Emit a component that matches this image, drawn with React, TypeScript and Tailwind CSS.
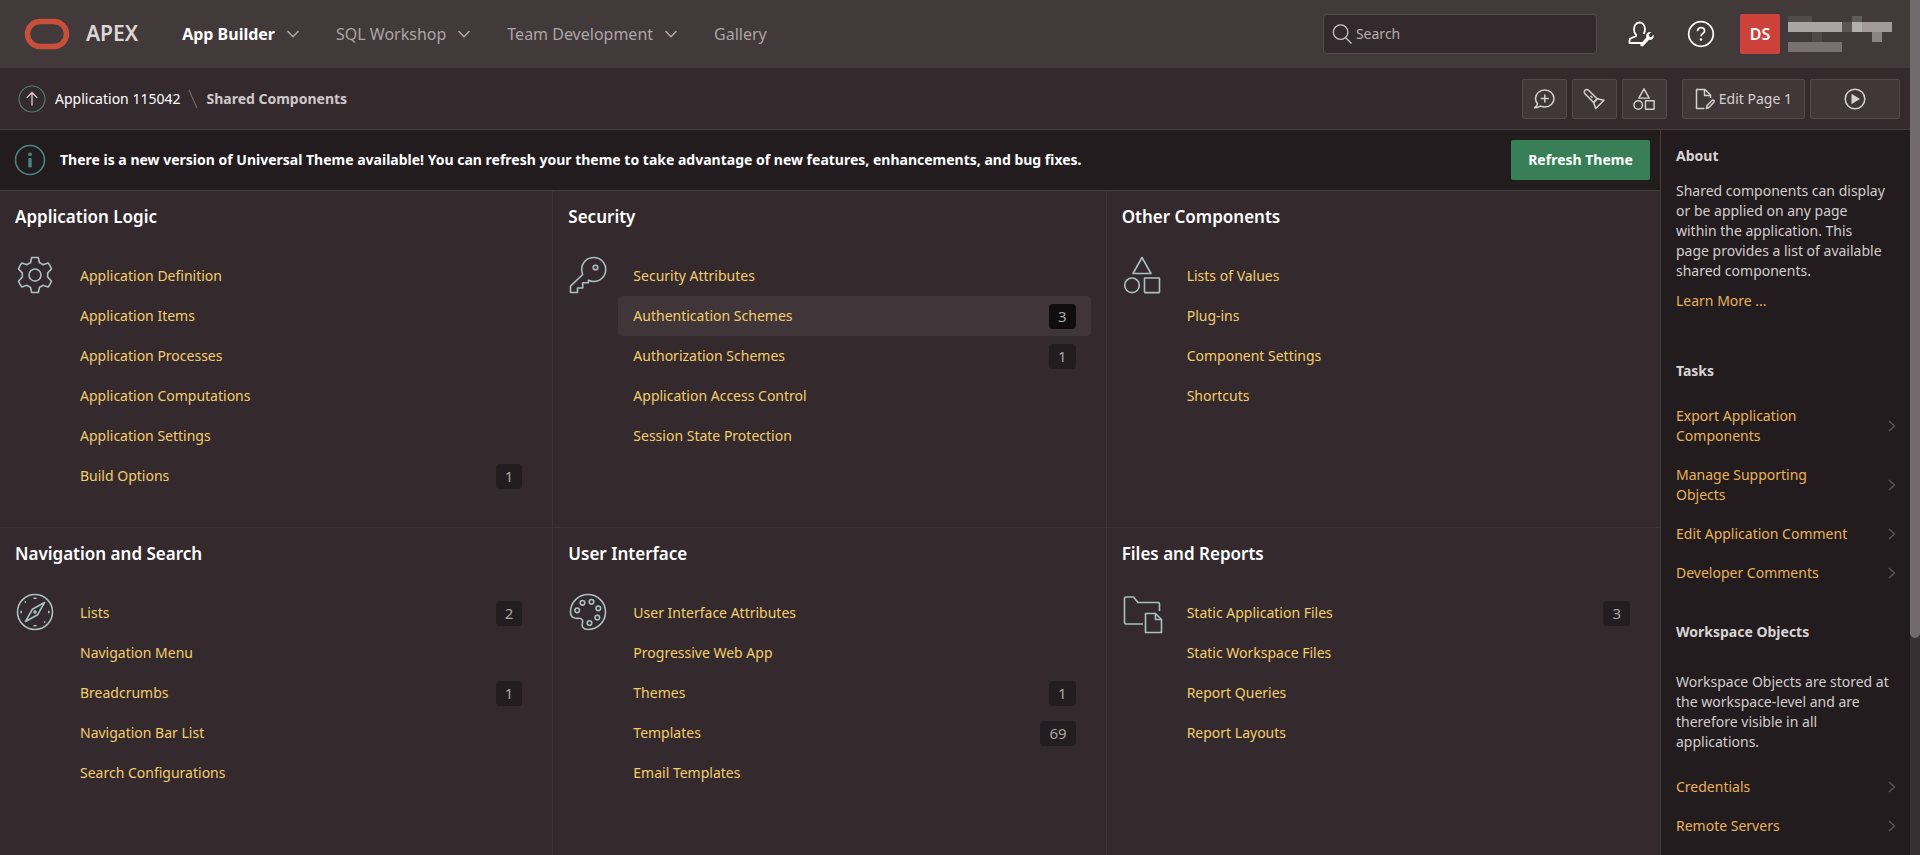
import React from 'react';

type IconProps = { className?: string };

const LogoIcon = () => (
  <svg viewBox="0 0 46 32" className="w-[46px] h-8" fill="none" stroke="#c8503a" strokeWidth="5.5">
    <rect x="3.5" y="3.5" width="39" height="25" rx="12.5" />
  </svg>
);

const ChevronDown = () => (
  <svg viewBox="0 0 12 8" className="w-3 h-2" fill="none" stroke="currentColor" strokeWidth="1.4">
    <path d="M0.500 1L6 6.800 11.500 1" />
  </svg>
);

const ChevronRight = () => (
  <svg viewBox="0 0 8 14" className="w-2 h-[14px] shrink-0 text-[#5d5556]" fill="none" stroke="currentColor" strokeWidth="1.3">
    <path d="M1 2l5.500 5L1 12" />
  </svg>
);

const SearchIcon = () => (
  <svg viewBox="0 0 22 22" className="w-[22px] h-[22px] text-[#c9c3c4]" fill="none" stroke="currentColor" strokeWidth="1.5">
    <circle cx="9.500" cy="9" r="8" />
    <path d="M15 15l6.500 6.500" />
  </svg>
);

const UserWrenchIcon = () => (
  <svg viewBox="0 0 28 28" className="w-7 h-7 text-white" fill="none" stroke="currentColor" strokeWidth="1.800" strokeLinejoin="round">
    <path d="M15 23H2.500v-2.500c0-1.500.8-2.200 2-2.600l4-1.400c.7-.3.9-1.200.4-1.800C7.600 13.200 7 11.300 7 9.200 7 5.500 9.200 2.500 12.500 2.500S18 5.500 18 9.200c0 1.800-.5 3.400-1.300 4.700" />
    <path
      d="M26.600 14.800l-2.500 2.400-1.900-.6-.5-1.900 2.300-2.500c-2.500-.5-4.900 1.300-4.900 3.800 0 .5.100 1 .3 1.400l-5.600 6c-.7.800-.6 1.900.1 2.600.8.700 1.900.600 2.600-.200l5.500-6c2.900.8 5.500-1.900 4.600-5z"
      fill="currentColor"
      stroke="none"
    />
  </svg>
);

const HelpIcon = () => (
  <svg viewBox="0 0 28 28" className="w-7 h-7 text-white" fill="none" stroke="currentColor" strokeWidth="1.700">
    <circle cx="14" cy="14" r="12.300" />
    <path d="M10.500 11.300c0-2.200 1.500-3.600 3.500-3.600s3.500 1.300 3.500 3.200c0 2.700-3.500 2.700-3.500 5.300" />
    <circle cx="14" cy="19.500" r="1.200" fill="currentColor" stroke="none" />
  </svg>
);

const CommentPlusIcon = () => (
  <svg viewBox="0 0 22 22" className="w-[22px] h-[22px]" fill="none" stroke="currentColor" strokeWidth="1.500" strokeLinejoin="round">
    <path d="M4.600 15.800C3.300 14.300 2.500 12.500 2.500 10.500c0-4.700 4.100-8.500 9.300-8.500 5.100 0 9.200 3.800 9.200 8.500S16.900 19 11.800 19c-1.600 0-3-.3-4.300-.9-1.500 1-3.500 1.700-5.900 1.600 1.600-1 2.600-2.300 3-3.900z" />
    <path d="M11.800 6.500v8M7.800 10.500h8" />
  </svg>
);

const FlashlightIcon = () => (
  <svg viewBox="0 0 22 22" className="w-[22px] h-[22px]" fill="none" stroke="currentColor" strokeWidth="1.500" strokeLinejoin="round">
    <path d="M10.600 14.600L2 5.800C1 4.800 1 3.300 2 2.300s2.500-1 3.500 0l8.700 8.500" />
    <path d="M14.200 10.800l6.800 1.400-8.200 8.300-2.200-5.900z" />
    <path d="M10.600 14.600l3.600-3.800M7.500 7.700l2 2" />
  </svg>
);

const ShapesIcon = ({ className }: IconProps) => (
  <svg viewBox="0 0 38 38" className={className} fill="none" stroke="currentColor" strokeLinejoin="round">
    <path d="M19 1.500l9 16H10z" />
    <circle cx="9" cy="29.300" r="7.300" />
    <rect x="21.500" y="22" width="15" height="14.600" rx="0.600" />
  </svg>
);

const EditPageIcon = () => (
  <svg viewBox="0 0 20 22" className="w-5 h-[22px]" fill="none" stroke="currentColor" strokeWidth="1.500" strokeLinejoin="round">
    <path d="M9.500 20.500H1.500v-19h8.500l5.500 5.500v3" />
    <path d="M9.500 1.500V7.500h6" />
    <path d="M11.500 20.500l.6-3 4.900-5c.6-.6 1.300-.6 1.800-.1s.5 1.200 0 1.800l-4.800 5.200z" />
  </svg>
);

const PlayIcon = () => (
  <svg viewBox="0 0 22 22" className="w-[22px] h-[22px]" fill="none" stroke="currentColor" strokeWidth="1.500">
    <circle cx="11" cy="11" r="9.800" />
    <path d="M7.500 5.800v10.400l8.500-5.200z" fill="currentColor" stroke="none" />
  </svg>
);

const UpIcon = () => (
  <svg viewBox="0 0 28 28" className="w-7 h-7" fill="none" strokeWidth="1.200">
    <circle cx="14" cy="14" r="13" stroke="#4f7a71" />
    <path d="M14 20.500V8M8.800 12.700L14 7.500l5.200 5.200" stroke="#cfc9c9" strokeWidth="1.400" />
  </svg>
);

const InfoIcon = () => (
  <svg viewBox="0 0 32 32" className="w-8 h-8 text-[#4b857e]" fill="none" stroke="currentColor" strokeWidth="1.600">
    <circle cx="16" cy="16" r="14.500" />
    <circle cx="16" cy="10.300" r="1.900" fill="currentColor" stroke="none" />
    <rect x="14.300" y="14" width="3.400" height="9.500" rx="1" fill="currentColor" stroke="none" />
  </svg>
);

const GearIcon = ({ className }: IconProps) => (
  <svg viewBox="0 0 38 38" className={className} fill="none" stroke="currentColor" strokeLinejoin="round">
    <path d="M15.700 1.500h6.600l1.200 5.300c1.300.4 2.400 1.100 3.400 1.900l5.300-1.700c1.300 1.600 2.400 3.500 3.300 5.700l-3.900 4.400c.2 1.300.2 2.500 0 3.800l3.900 4.400c-.9 2.200-2 4.100-3.300 5.700l-5.300-1.700c-1 .8-2.100 1.500-3.400 1.900l-1.200 5.300h-6.600l-1.200-5.300c-1.300-.4-2.400-1.100-3.400-1.900L5.800 31c-1.300-1.600-2.400-3.500-3.300-5.700l3.900-4.400c-.2-1.300-.2-2.500 0-3.800l-3.900-4.400C3.400 10.500 4.500 8.600 5.800 7l5.300 1.700c1-.8 2.100-1.500 3.400-1.900z" />
    <circle cx="19" cy="19" r="6" />
  </svg>
);

const KeyIcon = ({ className }: IconProps) => (
  <svg viewBox="0 0 38 38" className={className} fill="none" stroke="currentColor" strokeLinejoin="round">
    <path d="M13.700 18.500C13 17 12.700 15.300 12.700 13.500c0-6.700 5.200-12 12-12s12 5.300 12 12-5.300 12-12 12c-1.900 0-3.700-.4-5.300-1.200v2.500h-5.700V32H8.500v4.500H1.500V30.200z" />
    <circle cx="26.500" cy="11.500" r="2.300" />
  </svg>
);

const CompassIcon = ({ className }: IconProps) => (
  <svg viewBox="0 0 38 38" className={className} fill="none" stroke="currentColor" strokeLinejoin="round">
    <circle cx="19" cy="19" r="17.500" />
    <path d="M28.500 9.500l-6.800 12.200L9.500 28.500l6.800-12.200z" />
    <circle cx="19" cy="19" r="1" fill="currentColor" />
    <path d="M17.500 5.200h3M17.500 32.800h3M5.200 17.800v2.400M32.800 17.800v2.400M8.700 9.500l1.200-1M28.100 29.500l1.200-1" />
  </svg>
);

const PaletteIcon = ({ className }: IconProps) => (
  <svg viewBox="0 0 38 38" className={className} fill="none" stroke="currentColor" strokeLinejoin="round">
    <path d="M19 1.500c9.700 0 17.500 7.800 17.500 17.500S28.700 36.500 19 36.500c-5 0-6.500-3-5.600-6.200.9-3.100-.5-5.300-3.900-5-4 .4-8-.8-8-6.300C1.500 9.300 9.300 1.500 19 1.500z" />
    <circle cx="13.500" cy="9.800" r="2.300" />
    <circle cx="22.500" cy="8.800" r="2.300" />
    <circle cx="29.300" cy="15.300" r="2.300" />
    <circle cx="28.300" cy="24.500" r="2.300" />
    <circle cx="20.500" cy="30" r="2.300" />
    <circle cx="8.200" cy="17.300" r="2.300" />
  </svg>
);

const FolderFileIcon = ({ className }: IconProps) => (
  <svg viewBox="0 0 38 38" className={className} fill="none" stroke="currentColor" strokeLinejoin="round" overflow="visible">
    <path d="M20 31H3c-.9 0-1.500-.6-1.500-1.500V5.500C1.500 4.600 2.100 4 3 4h7.500l4.500 5.500h20c.9 0 1.500.6 1.500 1.500v7" />
    <path d="M22.500 20.500h10l6 6V39.500h-16z" />
    <path d="M32.500 20.500v6h6" />
  </svg>
);

type Item = { label: string; count?: number; active?: boolean };

const sections: { title: string; icon: React.FC<IconProps>; items: Item[] }[] = [
  {
    title: 'Application Logic',
    icon: GearIcon,
    items: [
      { label: 'Application Definition' },
      { label: 'Application Items' },
      { label: 'Application Processes' },
      { label: 'Application Computations' },
      { label: 'Application Settings' },
      { label: 'Build Options', count: 1 },
    ],
  },
  {
    title: 'Security',
    icon: KeyIcon,
    items: [
      { label: 'Security Attributes' },
      { label: 'Authentication Schemes', count: 3, active: true },
      { label: 'Authorization Schemes', count: 1 },
      { label: 'Application Access Control' },
      { label: 'Session State Protection' },
    ],
  },
  {
    title: 'Other Components',
    icon: ShapesIcon,
    items: [
      { label: 'Lists of Values' },
      { label: 'Plug-ins' },
      { label: 'Component Settings' },
      { label: 'Shortcuts' },
    ],
  },
  {
    title: 'Navigation and Search',
    icon: CompassIcon,
    items: [
      { label: 'Lists', count: 2 },
      { label: 'Navigation Menu' },
      { label: 'Breadcrumbs', count: 1 },
      { label: 'Navigation Bar List' },
      { label: 'Search Configurations' },
    ],
  },
  {
    title: 'User Interface',
    icon: PaletteIcon,
    items: [
      { label: 'User Interface Attributes' },
      { label: 'Progressive Web App' },
      { label: 'Themes', count: 1 },
      { label: 'Templates', count: 69 },
      { label: 'Email Templates' },
    ],
  },
  {
    title: 'Files and Reports',
    icon: FolderFileIcon,
    items: [
      { label: 'Static Application Files', count: 3 },
      { label: 'Static Workspace Files' },
      { label: 'Report Queries' },
      { label: 'Report Layouts' },
    ],
  },
];

const navItems = [
  { label: 'App Builder', menu: true, current: true },
  { label: 'SQL Workshop', menu: true },
  { label: 'Team Development', menu: true },
  { label: 'Gallery' },
];

const tasks = ['Export Application Components', 'Manage Supporting Objects', 'Edit Application Comment', 'Developer Comments'];

const workspaceLinks = ['Credentials', 'Remote Servers'];

const Header = () => (
  <header className="flex items-center h-[68px] pl-6 pr-[18px] bg-[#42393b]">
    <a href="#home" className="flex items-center gap-4 text-[21px] font-semibold text-[#ddd6d7]">
      <LogoIcon />
      APEX
    </a>
    <nav className="flex items-center gap-[37px] ml-11 text-base">
      {navItems.map((item) => (
        <a
          key={item.label}
          href="#nav"
          className={`flex items-center gap-3 ${item.current ? 'font-bold text-white' : 'text-[#aca5a6]'}`}
        >
          {item.label}
          {item.menu && (
            <span className="text-[#b5aeaf]">
              <ChevronDown />
            </span>
          )}
        </a>
      ))}
    </nav>
    <label className="flex items-center gap-1 w-[274px] h-10 px-2 ml-auto rounded bg-[#342a2d] border border-[#544b4d]">
      <SearchIcon />
      <input
        type="text"
        aria-label="Search"
        placeholder="Search"
        className="w-full text-sm bg-transparent outline-none text-white placeholder:text-[#b5aeaf]"
      />
    </label>
    <button aria-label="Administration" className="ml-[30px]">
      <UserWrenchIcon />
    </button>
    <button aria-label="Help" className="ml-8">
      <HelpIcon />
    </button>
    <button className="flex items-center gap-2 ml-[25px]" aria-label="Account">
      <span className="flex items-center justify-center w-10 h-10 rounded-xs bg-[#cd413b] text-base font-semibold text-white">DS</span>
      {/* redacted account name */}
      <span className="flex flex-col w-[104px]">
        <span className="flex h-[6px]">
          <span className="w-6 bg-[#524a4b]" />
          <span className="w-[10px] bg-[#625b5b] ml-10" />
        </span>
        <span className="flex h-[10px]">
          <span className="w-[54px] bg-[#a9a5a5]" />
          <span className="w-[10px] bg-[#5c5555]" />
          <span className="w-[10px] bg-[#b3afae]" />
          <span className="w-[30px] bg-[#a09b9a]" />
        </span>
        <span className="flex h-[10px]">
          <span className="w-[10px] bg-[#4e4848] ml-[24px]" />
          <span className="w-[10px] bg-[#8a8584] ml-[50px]" />
        </span>
        <span className="flex h-[10px]">
          <span className="w-[54px] bg-[#777271]" />
        </span>
      </span>
    </button>
  </header>
);

const toolButton = 'flex items-center justify-center h-10 rounded-xs bg-[#413739] border border-[#534a4c] text-[#d6d0d0]';

const Toolbar = () => (
  <div className="flex items-center h-[62px] pl-[18px] pr-[10px] bg-[#342a2d] border-b border-[#453c3e]">
    <a href="#up" aria-label="Up">
      <UpIcon />
    </a>
    <a href="#app" className="ml-[9px] text-sm text-white">Application 115042</a>
    <svg viewBox="0 0 10 20" className="w-[10px] h-5 mx-2" stroke="#6f6667" strokeWidth="1.200">
      <path d="M1 1l8 18" />
    </svg>
    <span className="text-sm font-bold text-[#cfc9c9]">Shared Components</span>
    <div className="flex gap-[5px] ml-auto">
      <button aria-label="Team comments" className={`${toolButton} w-[45px]`}>
        <CommentPlusIcon />
      </button>
      <button aria-label="Find" className={`${toolButton} w-[45px]`}>
        <FlashlightIcon />
      </button>
      <button aria-label="Shared components" className={`${toolButton} w-[45px]`}>
        <ShapesIcon className="w-[22px] h-[22px] stroke-[2.5]" />
      </button>
    </div>
    <button className={`${toolButton} gap-1 px-3 ml-[15px] text-sm`}>
      <EditPageIcon />
      Edit Page 1
    </button>
    <button aria-label="Run application" className={`${toolButton} w-[90px] ml-[5px]`}>
      <PlayIcon />
    </button>
  </div>
);

const Sidebar = () => (
  <aside className="w-[250px] shrink-0 pl-[15px] pr-[14px] bg-[#231c1e] border-l border-[#453c3e] text-sm leading-5">
    <h2 className="mt-4 font-bold text-[#d9d4d4]">About</h2>
    <p className="mt-[15px] max-w-[211px] text-[#d2cdcd]">
      Shared components can display or be applied on any page within the application. This page provides a list of available shared
      components.
    </p>
    <a href="#learn" className="block mt-[10px] text-[#e8b15c]">Learn More ...</a>
    <h2 className="mt-[50px] font-bold text-[#d9d4d4]">Tasks</h2>
    <ul className="flex flex-col gap-[19px] mt-[25px]">
      {tasks.map((task) => (
        <li key={task}>
          <a href="#task" className="flex items-center justify-between text-[#e8b15c]">
            <span className="max-w-[184px]">{task}</span>
            <ChevronRight />
          </a>
        </li>
      ))}
    </ul>
    <h2 className="mt-[39px] font-bold text-[#d9d4d4]">Workspace Objects</h2>
    <p className="mt-[30px] text-[#d2cdcd]">
      Workspace Objects are stored at the workspace-level and are therefore visible in all applications.
    </p>
    <ul className="flex flex-col gap-[19px] mt-[25px]">
      {workspaceLinks.map((link) => (
        <li key={link}>
          <a href="#workspace" className="flex items-center justify-between text-[#e8b15c]">
            {link}
            <ChevronRight />
          </a>
        </li>
      ))}
    </ul>
  </aside>
);

const App = () => {
  return (
    <div className="flex h-screen overflow-hidden bg-[#342a2d] font-['Noto_Sans',sans-serif]">
      <div className="flex flex-col flex-1 min-w-0">
        <Header />
        <Toolbar />
        <div className="flex flex-1 min-h-0">
          <main className="flex flex-col flex-1 min-w-0">
            <div className="flex items-center gap-[14px] h-[61px] shrink-0 pl-[14px] pr-[10px] bg-[#231c1e] border-b border-[#453c3e]">
              <InfoIcon />
              <p className="text-sm font-bold text-white">
                There is a new version of Universal Theme available! You can refresh your theme to take advantage of new features,
                enhancements, and bug fixes.
              </p>
              <button className="w-[139px] h-10 ml-auto rounded-xs bg-[#387f57] text-sm font-bold text-white">Refresh Theme</button>
            </div>
            <div className="grid grid-cols-3">
              {sections.map((section) => {
                const Icon = section.icon;
                return (
                  <section key={section.title} className="min-h-[337px] pb-[31px] border-r border-b border-[#3e3437] nth-[3n]:border-r-0">
                    <h2 className="pt-[14px] px-[15px] text-[17px] leading-6 font-semibold text-white">{section.title}</h2>
                    <div className="flex pt-[27px] pr-[15px] pl-4">
                      <Icon className="w-[38px] h-[38px] shrink-0 stroke-[1.6] text-[#a9c2be]" />
                      <ul className="flex-1 ml-[11px]">
                        {section.items.map((item) => (
                          <li key={item.label}>
                            <a
                              href="#component"
                              className={`flex items-center justify-between h-10 px-[15px] rounded text-sm text-[#f3cd6c] ${item.active ? 'bg-[#403639]' : ''}`}
                            >
                              {item.label}
                              {item.count && (
                                <span
                                  className={`h-[25px] px-[9px] rounded text-[15px] leading-[25px] text-[#aaa4a4] ${item.active ? 'bg-[#110d0e]' : 'bg-[#241d1f]'}`}
                                >
                                  {item.count}
                                </span>
                              )}
                            </a>
                          </li>
                        ))}
                      </ul>
                    </div>
                  </section>
                );
              })}
            </div>
          </main>
          <Sidebar />
        </div>
      </div>
      {/* page scrollbar */}
      <div className="w-[10px] shrink-0 bg-[#363032]">
        <div className="h-[638px] rounded-b-full bg-[#736a6d]" />
      </div>
    </div>
  );
};

export default App;
